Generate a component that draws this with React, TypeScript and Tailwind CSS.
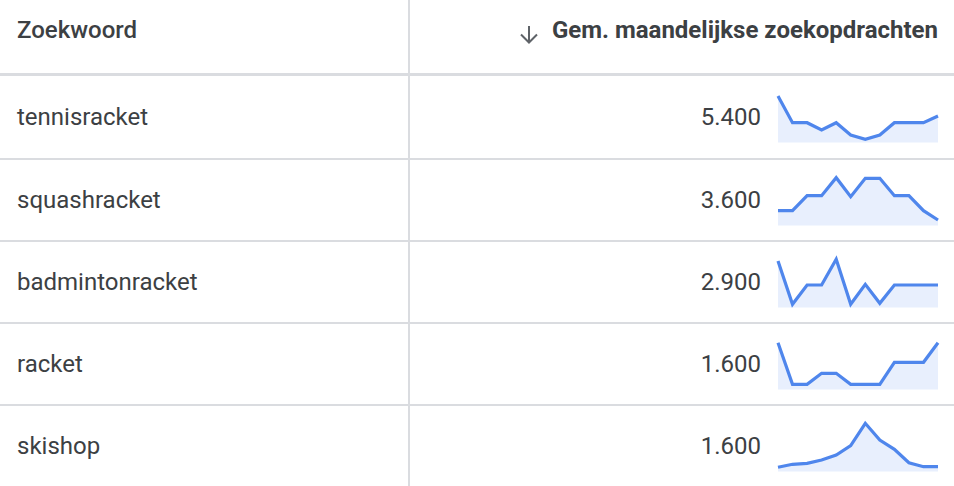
import React from "react";

type Row = { kw: string; vol: string; pts: number[]; h: string; mt: string };

const rows: Row[] = [
  { kw: "tennisracket", vol: "5.400", pts: [3, 29.7, 29.7, 37, 29.7, 42, 46.3, 42, 29.7, 29.7, 29.7, 23], h: "h-[84px]", mt: "mt-[17px]" },
  { kw: "squashracket", vol: "3.600", pts: [34.7, 34.7, 19.7, 19.7, 1.7, 20.7, 2.3, 2.3, 19.7, 19.7, 34.7, 44], h: "h-[82px]", mt: "mt-[16px]" },
  { kw: "badmintonracket", vol: "2.900", pts: [3, 46.3, 27, 27, 1.3, 46.3, 26.3, 45.3, 27, 27, 27, 27], h: "h-[82px]", mt: "mt-[16px]" },
  { kw: "racket", vol: "1.600", pts: [2.7, 44.3, 44.3, 33.3, 33.3, 44.3, 44.3, 44.3, 22.3, 22.3, 22.3, 2.7], h: "h-[82px]", mt: "mt-[16px]" },
  { kw: "skishop", vol: "1.600", pts: [45.3, 42.3, 41.3, 38, 33, 23.7, 1.3, 18, 27.3, 40.7, 44.7, 44.7], h: "h-[82px]", mt: "mt-[16px]" },
];

function Spark({ pts }: { pts: number[] }) {
  const step = 160 / (pts.length - 1);
  const line = pts.map((y, i) => `${(i * step).toFixed(1)},${y}`).join(" ");
  const area = `0,49.5 ${line} 160,49.5`;
  return (
    <svg width="160" height="50" viewBox="0 0 160 50" className="overflow-visible block">
      <polygon points={area} fill="#e8effd" />
      <polyline points={line} fill="none" stroke="#4f86ec" strokeWidth="3.2" strokeLinejoin="miter" strokeLinecap="butt" />
    </svg>
  );
}

export default function App() {
  return (
    <div
      className="w-[954px] h-[486px] overflow-hidden bg-white text-[#3c4043]"
      style={{ fontFamily: "Roboto, 'Liberation Sans', sans-serif" }}
    >
      <div className="flex h-[76px] border-b-[3px] border-[#dadce0]">
        <div className="w-[410px] border-r-2 border-[#dadce0] pl-[17px] pt-[16px] text-[24px] leading-[28px] font-medium text-[#3c4043]">
          Zoekwoord
        </div>
        <div className="flex-1 flex justify-end items-start pr-[16px] pt-[16px]">
          <svg width="20" height="18" viewBox="0 0 20 18" className="mt-[10px] mr-[13px]" fill="none" stroke="#5f6368" strokeWidth="2">
            <path d="M10 0 V16.5" />
            <path d="M2 8.5 L10 16.5 L18 8.5" />
          </svg>
          <span className="text-[24px] leading-[28px] font-bold text-[#3c4043]">
            Gem. maandelijkse zoekopdrachten
          </span>
        </div>
      </div>
      {rows.map((r) => (
        <div key={r.kw} className={`flex ${r.h} border-b-2 border-[#dadce0]`}>
          <div className="w-[410px] border-r-2 border-[#dadce0] pl-[17px] flex items-center text-[24px] leading-[28px]">
            {r.kw}
          </div>
          <div className="flex-1 flex justify-end pr-[16px]">
            <div className="self-center text-[24px] leading-[28px] mr-[17px]">{r.vol}</div>
            <div className={`${r.mt} self-start`}>
              <Spark pts={r.pts} />
            </div>
          </div>
        </div>
      ))}
    </div>
  );
}
